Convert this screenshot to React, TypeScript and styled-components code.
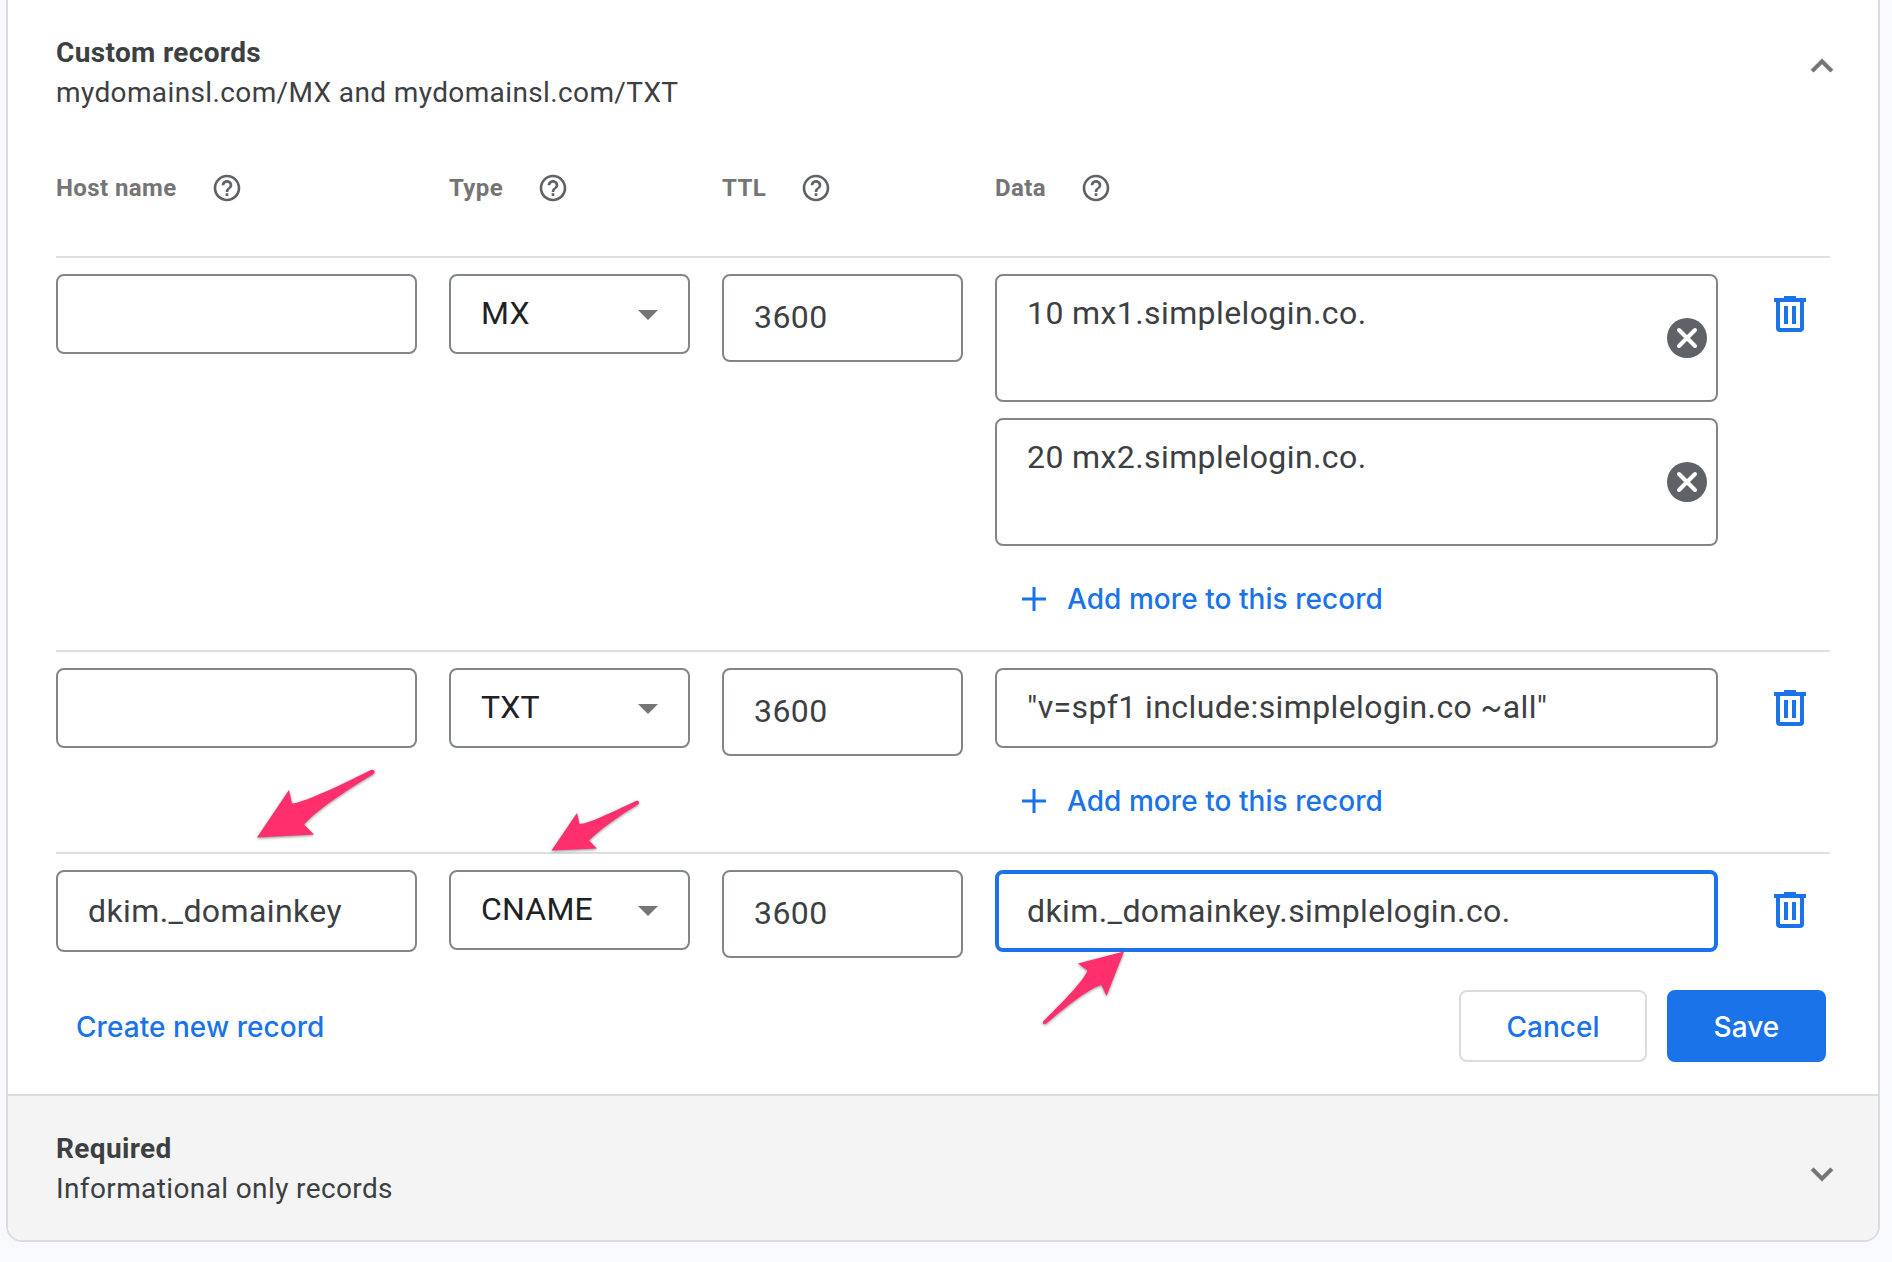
import React from "react";
import styled, { createGlobalStyle, css } from "styled-components";

const GlobalStyle = createGlobalStyle`
  * { box-sizing: border-box; }
  body { margin: 0; background: #f8f9fc; font-family: Roboto, "Liberation Sans", sans-serif; color: #3c4043; }
`;

const columns = "361px 241px 241px 723px 1fr";

const Page = styled.main`
  position: relative;
  height: 1262px;
  overflow: hidden;
  padding: 0 12px 20px 6px;
`;

const Card = styled.div`
  height: 1242px;
  border: 2px solid #dadce0;
  border-top: 0;
  border-radius: 0 0 16px 16px;
  background: #fff;
  overflow: hidden;
`;

const Panel = styled.section`
  height: 1094px;
  padding: 33px 48px 0;
`;

const RequiredPanel = styled.section`
  height: 146px;
  padding: 33px 48px 0;
  border-top: 2px solid #dadce0;
  background: #f4f4f4;
`;

const PanelHeader = styled.header`
  display: flex;
  justify-content: space-between;
`;

const Title = styled.h2`
  margin: 0;
  font-size: 28px;
  line-height: 40px;
  font-weight: 700;
  letter-spacing: 0.35px;
`;

const Subtitle = styled.p`
  margin: 0;
  font-size: 28px;
  line-height: 40px;
  letter-spacing: 0.38px;
`;

const ChevronIcon = styled.svg<{ $up?: boolean }>`
  width: 44px;
  height: 44px;
  margin: ${(p) => (p.$up ? 11 : 23)}px -14px 0 0;
  fill: #757575;
  stroke: #757575;
  stroke-width: 0.35;
  transform: ${(p) => (p.$up ? "rotate(180deg)" : "none")};
`;

const ColumnHeads = styled.div`
  display: grid;
  grid-template-columns: ${columns};
  column-gap: 32px;
  height: 143px;
  padding-top: 59px;
`;

const ColumnHead = styled.div`
  display: flex;
  align-items: center;
  height: 32px;
  font-size: 24px;
  font-weight: 700;
  letter-spacing: 0.4px;
  color: #757575;
`;

const HelpIcon = styled.svg`
  width: 32px;
  height: 32px;
  margin-left: 34px;
  fill: #5f6368;
`;

const RecordRow = styled.div<{ $height: number }>`
  display: grid;
  grid-template-columns: ${columns};
  column-gap: 32px;
  align-items: start;
  height: ${(p) => p.$height}px;
  padding-top: 16px;
  border-top: 2px solid #dfdfdf;
`;

const Field = styled.div<{ $height?: number; $focused?: boolean }>`
  position: relative;
  height: ${(p) => p.$height ?? 80}px;
  padding: 17px 30px 0;
  border: 2px solid #80868b;
  border-radius: 8px;
  font-size: 32px;
  line-height: 40px;
  letter-spacing: 0.4px;
  white-space: nowrap;
  ${(p) =>
    p.$focused &&
    css`
      padding: 17px 28px 0;
      border: 4px solid #1a73e8;
    `}
`;

const HostField = styled(Field)`
  padding-top: 19px;
`;

const TtlField = styled(Field)`
  padding-top: 21px;
`;

const SelectField = styled(Field)`
  display: flex;
  justify-content: space-between;
  color: #202124;
  letter-spacing: 0.2px;
`;

const SelectArrow = styled.span`
  width: 0;
  height: 0;
  margin-top: 17px;
  border: 10px solid transparent;
  border-top-color: #757575;
  border-bottom: 0;
`;

const DataStack = styled.div`
  display: flex;
  flex-direction: column;
  gap: 16px;
`;

const ClearIcon = styled.svg`
  position: absolute;
  top: 38px;
  right: 5px;
  width: 48px;
  height: 48px;
  fill: #5f6368;
`;

const TextButton = styled.button`
  display: flex;
  align-items: center;
  height: 72px;
  padding: 1px 0 0;
  border: 0;
  background: none;
  color: #1a73e8;
  font: 500 28px Inter, "Liberation Sans", sans-serif;
  letter-spacing: 0.05px;
  white-space: nowrap;
`;

const AddButton = styled(TextButton)`
  margin-left: 27px;
  gap: 21px;
`;

const TrashIcon = styled.svg`
  width: 32px;
  height: 36px;
  margin: 22px 0 0 24px;
  fill: #1a73e8;
`;

const Footer = styled.footer`
  display: flex;
  align-items: center;
  padding: 0 4px 0 20px;
  height: 72px;
`;

const Action = styled(TextButton)<{ $primary?: boolean; $width: number }>`
  justify-content: center;
  width: ${(p) => p.$width}px;
  border: 2px solid ${(p) => (p.$primary ? "#1a73e8" : "#dadce0")};
  border-radius: 8px;
  background: ${(p) => (p.$primary ? "#1a73e8" : "#fff")};
  color: ${(p) => (p.$primary ? "#fff" : "#1a73e8")};
  margin-left: ${(p) => (p.$primary ? "20px" : "auto")};
`;

const Annotations = styled.svg`
  position: absolute;
  inset: 0;
  width: 1892px;
  height: 1262px;
  pointer-events: none;
  fill: #ff2f6e;
  filter: drop-shadow(0 1.5px 1.5px rgba(0, 0, 0, 0.45));
`;

const Help = () => (
  <HelpIcon viewBox="0 0 24 24">
    <path d="M11 18h2v-2h-2v2zm1-16C6.48 2 2 6.48 2 12s4.48 10 10 10 10-4.48 10-10S17.52 2 12 2zm0 18c-4.41 0-8-3.59-8-8s3.59-8 8-8 8 3.59 8 8-3.59 8-8 8zm0-14c-2.21 0-4 1.79-4 4h2c0-1.1.9-2 2-2s2 .9 2 2c0 2-3 1.75-3 5h2c0-2.25 3-2.5 3-5 0-2.21-1.79-4-4-4z" />
  </HelpIcon>
);

const Chevron = ({ up }: { up?: boolean }) => (
  <ChevronIcon $up={up} viewBox="0 0 24 24">
    <path d="M16.59 8.59 12 13.17 7.41 8.59 6 10l6 6 6-6z" />
  </ChevronIcon>
);

const Clear = () => (
  <ClearIcon viewBox="0 0 48 48">
    <circle cx="24" cy="24" r="20" />
    <path d="M16 16l16 16M32 16L16 32" stroke="#fff" strokeWidth="4" strokeLinecap="round" />
  </ClearIcon>
);

const Trash = () => (
  <TrashIcon viewBox="0 0 16 18">
    <path fillRule="evenodd" d="M5 0h6v1h5v2h-1v13a2 2 0 0 1-2 2H3a2 2 0 0 1-2-2V3H0V1h5zM3 3v13h10V3zM5 5h2v9H5zM9 5h2v9H9z" />
  </TrashIcon>
);

const AddMore = () => (
  <AddButton>
    <svg width="24" height="24" viewBox="0 0 24 24" stroke="#1a73e8" strokeWidth="3">
      <path d="M12 0v24M0 12h24" />
    </svg>
    Add more to this record
  </AddButton>
);

type Entry = { height: number; host: string; type: string; data: string[]; editing?: boolean };

const records: Entry[] = [
  { height: 394, host: "", type: "MX", data: ["10 mx1.simplelogin.co.", "20 mx2.simplelogin.co."] },
  { height: 202, host: "", type: "TXT", data: ['"v=spf1 include:simplelogin.co ~all"'] },
  { height: 138, host: "dkim._domainkey", type: "CNAME", data: ["dkim._domainkey.simplelogin.co."], editing: true },
];

const heads = ["Host name", "Type", "TTL", "Data"];

export default function App() {
  return (
    <Page>
      <GlobalStyle />
      <Card>
        <Panel>
          <PanelHeader>
            <div>
              <Title>Custom records</Title>
              <Subtitle>mydomainsl.com/MX and mydomainsl.com/TXT</Subtitle>
            </div>
            <Chevron up />
          </PanelHeader>
          <ColumnHeads>
            {heads.map((label) => (
              <ColumnHead key={label}>
                {label}
                <Help />
              </ColumnHead>
            ))}
          </ColumnHeads>
          {records.map((r) => (
            <RecordRow key={r.type} $height={r.height}>
              <HostField $height={r.editing ? 82 : 80}>{r.host}</HostField>
              <SelectField>
                {r.type}
                <SelectArrow />
              </SelectField>
              <TtlField $height={88}>3600</TtlField>
              <DataStack>
                {r.data.map((d) => (
                  <Field key={d} $height={r.editing ? 82 : r.data.length > 1 ? 128 : 80} $focused={r.editing}>
                    {d}
                    {r.data.length > 1 && <Clear />}
                  </Field>
                ))}
                {!r.editing && <AddMore />}
              </DataStack>
              <Trash />
            </RecordRow>
          ))}
          <Footer>
            <TextButton>Create new record</TextButton>
            <Action $width={188}>Cancel</Action>
            <Action $width={159} $primary>
              Save
            </Action>
          </Footer>
        </Panel>
        <RequiredPanel>
          <PanelHeader>
            <div>
              <Title>Required</Title>
              <Subtitle>Informational only records</Subtitle>
            </div>
            <Chevron />
          </PanelHeader>
        </RequiredPanel>
      </Card>
      <Annotations viewBox="0 0 1892 1262">
        <path d="M257 837.5 289 790 292 803.5C302 803 335 788 371 770C374 769 376 772 373.500 774C345 791 316 811 304 824.500L314 834.500Z" />
        <path d="M551.500 850.500 577 813 579.500 824C588 824 610 813 636 801C639 800 640 803 638 804.500C617 817 598 831 589 840.500L597 848.500Z" />
        <path d="M1124 951.500 1078 963.500 1087.500 970.500C1084 980 1065 1000 1043.500 1021C1042 1024 1044 1025 1047 1023C1070 1003 1092 987 1101.500 985L1106.500 996Z" />
      </Annotations>
    </Page>
  );
}
